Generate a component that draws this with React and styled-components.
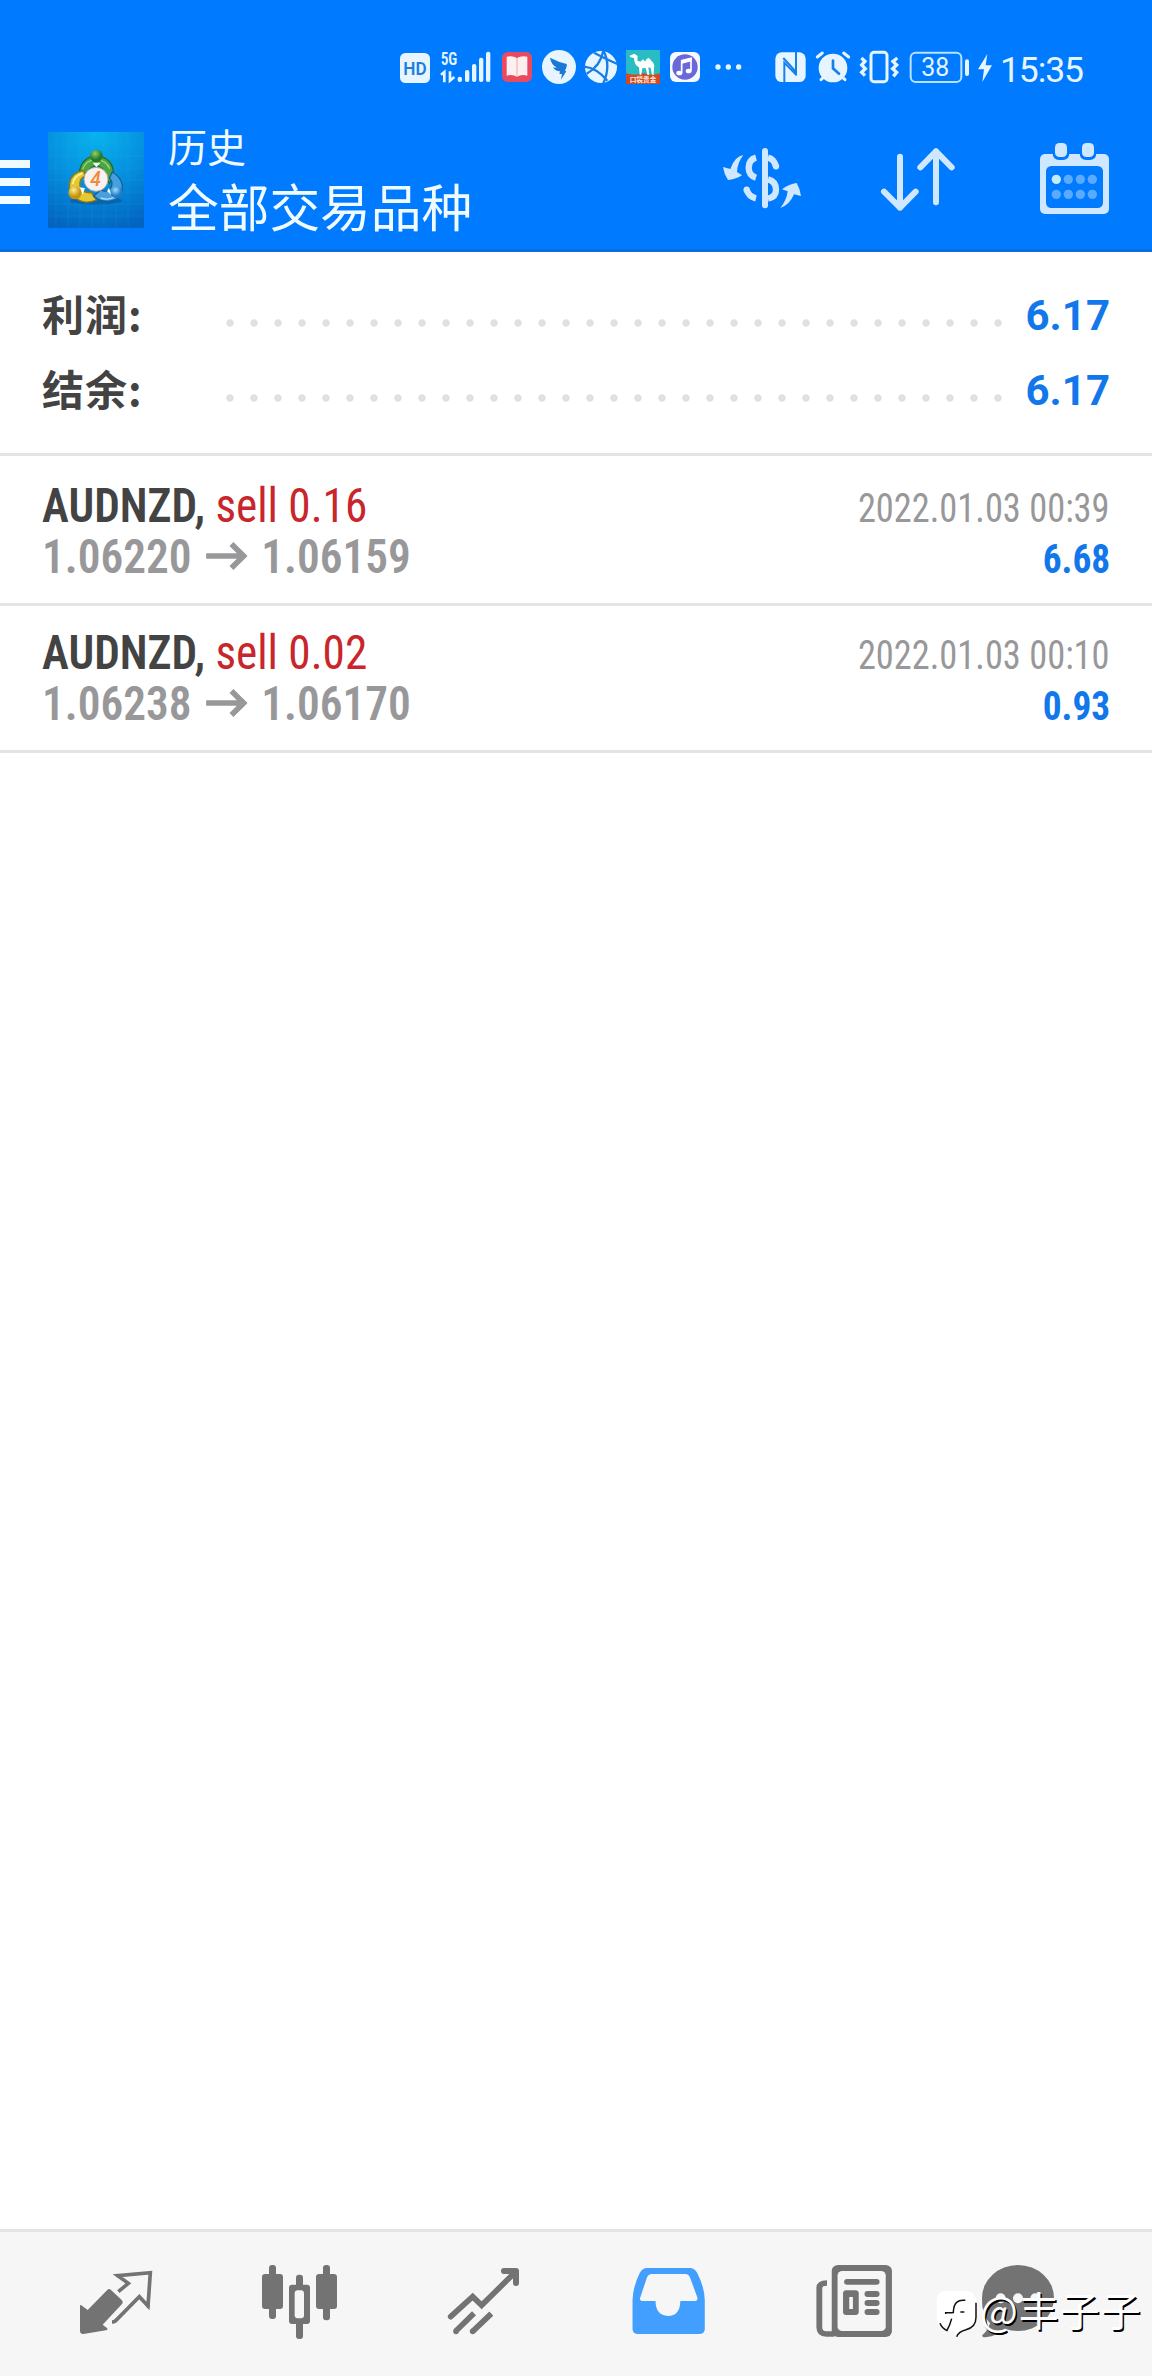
import React from 'react';
import styled, { createGlobalStyle } from 'styled-components';

const c = {
  blue: '#007aff',
  ice: '#e6f5ff',
  icon: '#cfe8ff',
  title: '#f0fbff',
  dark: '#434343',
  grey: '#98989a',
  nav: '#737373',
  navBg: '#f6f6f6',
  line: '#e4e4e4',
  red: '#c8262a',
  profit: '#1277ea',
};

const GlobalStyle = createGlobalStyle`
  * { box-sizing: border-box; }
  body { margin: 0; background: #fff; font-family: Roboto, "Noto Sans CJK SC", sans-serif; }
  svg { display: block; flex: none; }
`;

const Screen = styled.div`
  display: flex;
  flex-direction: column;
  width: 1152px;
  height: 2376px;
  background: #fff;
  overflow: hidden;
`;

const StatusBar = styled.div`
  display: flex;
  align-items: center;
  height: 110px;
  padding: 30px 0 0 400px;
  background: ${c.blue};
`;

const Clock = styled.span`
  margin-left: 3px;
  padding-bottom: 1px;
  font-size: 35.5px;
  line-height: 60px;
  letter-spacing: -1.1px;
  color: ${c.ice};
`;

const AppBar = styled.header`
  display: flex;
  height: 142px;
  background: ${c.blue};
  border-bottom: 3px solid #0a6cdd;
`;

const MenuButton = styled.div`
  display: flex;
  flex-direction: column;
  gap: 10px;
  width: 48px;
  padding-top: 50px;
`;

const MenuLine = styled.span`
  width: 30px;
  height: 8px;
  background: ${c.title};
`;

const LogoSlot = styled.div`
  width: 120px;
  padding-top: 22px;
`;

const Titles = styled.div`
  display: flex;
  flex-direction: column;
  width: 553px;
  padding-top: 7px;
  color: ${c.title};
  font-family: "Noto Sans CJK SC", sans-serif;
`;

const Caption = styled.span`
  font-size: 39px;
  line-height: 56px;
`;

const Title = styled.span`
  font-size: 50.7px;
  line-height: 64px;
`;

const Actions = styled.div`
  display: flex;
  justify-content: space-between;
  width: 390px;
  padding-top: 30px;
`;

const Summary = styled.section`
  display: flex;
  flex-direction: column;
  height: 204px;
  padding: 26px 42px 0;
  border-bottom: 3px solid ${c.line};
`;

const SummaryRow = styled.div`
  display: flex;
  align-items: center;
  height: 75px;
`;

const Label = styled.span`
  width: 176px;
  padding-bottom: 5px;
  font: 700 42px/70px "Noto Sans CJK SC", sans-serif;
  letter-spacing: 1px;
  color: ${c.dark};
`;

const Leader = styled.span`
  width: 792px;
  height: 24px;
  margin-top: 15px;
  background: radial-gradient(circle at center, #e0e0e0 3.2px, transparent 4.2px) 0 0 / 24px 24px;
`;

const Total = styled.span`
  flex: 1;
  text-align: right;
  font-size: 42px;
  font-weight: 700;
  line-height: 75px;
  color: ${c.profit};
`;

const Deal = styled.article`
  padding: ${(p) => p.$top}px 42px 21px;
  border-bottom: 3px solid ${c.line};
  font-family: "Roboto Condensed", Roboto, sans-serif;
`;

const DealLine = styled.div`
  display: flex;
  align-items: baseline;
  justify-content: space-between;
  height: 51px;
  line-height: 51px;
  white-space: pre;
`;

const Symbol = styled.span`
  font-size: 48px;
  font-weight: 600;
  color: ${c.dark};
  transform: scaleX(0.942);
  transform-origin: left;
`;

const Side = styled.span`
  font-weight: 400;
  color: ${c.red};
`;

const Prices = styled.span`
  display: flex;
  align-items: baseline;
  gap: 15px;
  font-size: 48px;
  font-weight: 600;
  color: ${c.grey};
  transform: scaleX(0.943);
  transform-origin: left;
`;

const Time = styled.span`
  font-size: 40px;
  color: ${c.grey};
  transform: scaleX(0.91);
  transform-origin: right;
`;

const Profit = styled.span`
  font-size: 40px;
  font-weight: 700;
  color: ${c.profit};
  transform: scaleX(0.935);
  transform-origin: right;
`;

const ArrowBox = styled.span`
  align-self: center;
  margin-bottom: 2px;
`;

const Blank = styled.main`
  flex: 1;
`;

const NavBar = styled.nav`
  position: relative;
  display: flex;
  height: 147px;
  padding: 0 24px;
  background: ${c.navBg};
  border-top: 3px solid ${c.line};
`;

const Watermark = styled.div`
  position: absolute;
  left: 936px;
  top: 52px;
  display: flex;
  align-items: center;
  height: 60px;
  color: #fff;
`;

const WatermarkName = styled.span`
  padding-bottom: 11px;
  font: 400 40px/48px "Noto Sans CJK SC", sans-serif;
  letter-spacing: 1px;
  text-shadow: 1.5px 1.5px 0.5px #000;
`;

/* Icons of the status bar share a 3x unit grid, 180 units high. */
const StatusIcon = ({ from, to, children }) => (
  <svg width={(to - from) / 3} height="60" viewBox={`${from} 0 ${to - from} 180`} fill={c.ice}>
    {children}
  </svg>
);

const ActionIcon = ({ from, width, children }) => (
  <svg width={width} height="80" viewBox={`${from} 60 ${width * 3} 240`} fill={c.icon}>
    {children}
  </svg>
);

const NavIcon = ({ index, children }) => (
  <svg width="184" height="144" viewBox={`${24 + 184 * index} 2232 184 144`} fill={c.nav}>
    {children}
  </svg>
);

const left = 'translate(40 2220) scale(.33333)';
const right = 'translate(580 2220) scale(.36483 .33333)';

function StatusIcons() {
  return (
    <>
      <StatusIcon from={30} to={135}>
        <rect x="30" y="39" width="90" height="90" rx="16" />
        <text x="75" y="104" textAnchor="middle" fontFamily="Roboto" fontWeight="600" fontSize="56" textLength="70" lengthAdjust="spacingAndGlyphs" fill="#1c7fe0">HD</text>
      </StatusIcon>
      <StatusIcon from={135} to={321}>
        <text x="152" y="76" fontFamily="Roboto Condensed, Roboto" fontWeight="600" fontSize="56" textLength="50" lengthAdjust="spacingAndGlyphs">5G</text>
        <path d="M153 104L163 96V127M180 94V122L193 111" fill="none" stroke={c.ice} strokeWidth="8" />
        <rect x="203" y="110" width="13" height="16" rx="6" />
        <rect x="225" y="90" width="13" height="36" rx="6" />
        <rect x="246" y="72" width="13" height="54" rx="6" />
        <rect x="267" y="53" width="13" height="73" rx="6" />
        <rect x="288" y="35" width="13" height="91" rx="6" />
      </StatusIcon>
      <StatusIcon from={321} to={441}>
        <rect x="336" y="36" width="90" height="90" rx="17" fill="#ea4a60" />
        <path d="M350 50Q368 46 381 54Q394 46 412 50V107Q394 102 381 110Q368 102 350 107Z" fill="#fff0f0" />
        <path d="M381 54V108" stroke="#e9a7b0" strokeWidth="3" />
      </StatusIcon>
      <StatusIcon from={441} to={570}>
        <circle cx="507" cy="81" r="51" />
        <path d="M480 53Q505 66 530 72Q532 78 525 92L529 94L513 119L516 102H508L510 94Q496 94 489 82Q496 84 500 82Q484 75 480 53Z" fill="#1b78d5" />
      </StatusIcon>
      <StatusIcon from={570} to={693}>
        <circle cx="633" cy="81" r="48" />
        <path d="M583 80Q620 84 652 122M590 101Q632 78 640 32M612 38Q650 58 682 72M640 32Q664 76 640 130" fill="none" stroke="#177de8" strokeWidth="7" />
      </StatusIcon>
      <StatusIcon from={693} to={825}>
        <rect x="708" y="30" width="102" height="102" fill="#27bdc2" />
        <path d="M708 100Q735 108 760 100Q790 108 810 100V132H708Z" fill="#d04a24" />
        <path d="M719 47L733 41L743 48L742 62L752 65Q759 52 765 65Q774 45 784 62Q796 72 792 84L791 104H786L782 84L775 82L778 104H772L767 84L757 85L754 104H749L747 82Q733 77 732 54L721 52Z" fill="#fff" />
        <text x="759" y="126" textAnchor="middle" fontFamily="Noto Sans CJK SC" fontWeight="700" fontSize="20" fill="#ffe6d8">口袋贵金</text>
      </StatusIcon>
      <StatusIcon from={825} to={954}>
        <rect x="840" y="36" width="90" height="90" rx="18" fill="#f7f9ff" />
        <circle cx="885" cy="81" r="38" fill="#6a68d8" />
        <path d="M875 99V62L903 55V92" fill="none" stroke="#fff" strokeWidth="5" />
        <path d="M873 61L905 53V64L873 72Z" fill="#fff" />
        <ellipse cx="868" cy="99" rx="9" ry="7" fill="#fff" />
        <ellipse cx="896" cy="93" rx="9" ry="7" fill="#fff" />
      </StatusIcon>
      <StatusIcon from={954} to={1080}>
        <circle cx="984" cy="81" r="8" />
        <circle cx="1015" cy="81" r="8" />
        <circle cx="1046" cy="81" r="8" />
      </StatusIcon>
      <StatusIcon from={30} to={216}>
        <rect x="106" y="37" width="91" height="89" rx="19" />
        <path d="M133 128V68L170 106M168 34V96L130 54" fill="none" stroke="#1680ee" strokeWidth="6" />
      </StatusIcon>
      <StatusIcon from={216} to={345}>
        <circle cx="279" cy="84" r="43" />
        <path d="M232 51L247 39M311 39L326 51M243 119L255 108M315 119L303 108" stroke={c.ice} strokeWidth="9" strokeLinecap="round" />
        <path d="M279 62V85L297 101" fill="none" stroke="#177fe8" strokeWidth="8" strokeLinecap="round" />
      </StatusIcon>
      <StatusIcon from={345} to={495}>
        <rect x="393" y="37" width="48" height="88" rx="9" fill="none" stroke={c.ice} strokeWidth="9" />
        <path d="M364 54L375 64L365 75L376 86L365 97L375 107M472 54L459 64L470 75L458 86L470 97L460 109" fill="none" stroke={c.ice} strokeWidth="10" />
      </StatusIcon>
      <StatusIcon from={495} to={702}>
        <rect x="512" y="38" width="152" height="88" rx="15" fill="none" stroke="#b9e2ff" strokeWidth="6" />
        <rect x="675" y="58" width="12" height="50" rx="6" />
        <text x="586" y="109" textAnchor="middle" fontFamily="Roboto" fontSize="76" textLength="84" lengthAdjust="spacingAndGlyphs">38</text>
      </StatusIcon>
      <StatusIcon from={702} to={771}>
        <path d="M742 42L714 88H732L727 126L756 76H737Z" />
      </StatusIcon>
    </>
  );
}

function Logo() {
  return (
    <svg width="96" height="96" viewBox="0 6 288 288">
      <defs>
        <radialGradient id="sky" cx=".5" cy="0" r="1.05">
          <stop offset="0" stopColor="#08b4ee" />
          <stop offset=".5" stopColor="#0590de" />
          <stop offset="1" stopColor="#0264c0" />
        </radialGradient>
        <radialGradient id="g" cx=".4" cy=".3"><stop offset="0" stopColor="#8fd06c" /><stop offset="1" stopColor="#247b2c" /></radialGradient>
        <radialGradient id="y" cx=".4" cy=".3"><stop offset="0" stopColor="#fff08c" /><stop offset="1" stopColor="#c5920f" /></radialGradient>
        <radialGradient id="b" cx=".4" cy=".3"><stop offset="0" stopColor="#9bdcff" /><stop offset="1" stopColor="#1d7cc4" /></radialGradient>
      </defs>
      <rect y="6" width="288" height="288" fill="url(#sky)" />
      <path d="M24 6V294M60 6V294M96 6V294M132 6V294M168 6V294M204 6V294M240 6V294M0 42H288M0 78H288M0 114H288M0 150H288M0 186H288M0 222H288M0 258H288" stroke="#5cc4f5" strokeOpacity=".14" strokeWidth="2" />
      <ellipse cx="144" cy="212" rx="78" ry="12" fill="#064a86" opacity=".45" />
      <path d="M94 128Q98 84 145 76Q193 84 196 126Q194 150 184 160L170 130Q165 112 145 106Q124 112 118 128Z" fill="#4ea53f" stroke="#1f6d31" strokeWidth="4" />
      <path d="M104 118Q112 91 145 88Q175 91 185 116" fill="none" stroke="#9bd585" strokeWidth="4" />
      <path d="M108 122Q70 127 65 160Q60 187 84 205Q110 225 145 210L130 188Q104 190 96 170Q92 148 110 138Z" fill="#e4c932" stroke="#947616" strokeWidth="4" />
      <path d="M103 130Q78 138 74 162" fill="none" stroke="#fff39a" strokeWidth="5" />
      <path d="M193 126Q220 141 223 168Q224 196 204 208Q166 224 137 198L158 180Q181 190 190 170Q196 155 184 145Z" fill="#479fdc" stroke="#12609e" strokeWidth="4" />
      <path d="M158 204Q180 212 199 201" fill="none" stroke="#a8dcff" strokeWidth="4" />
      <path d="M134 98H158L145 112ZM92 172L104 194L111 174ZM183 173L190 194L177 184Z" fill="#f3fff2" />
      <circle cx="145" cy="78" r="19" fill="url(#g)" />
      <circle cx="81" cy="188" r="20" fill="url(#y)" />
      <circle cx="206" cy="187" r="18" fill="url(#b)" />
      <circle cx="144" cy="148" r="36" fill="#f7f1f1" stroke="#a8a8a0" strokeWidth="3" />
      <text x="143" y="168" textAnchor="middle" fontFamily="Roboto" fontStyle="italic" fontWeight="500" fontSize="58" fill="#f08a3c">4</text>
    </svg>
  );
}

function ActionIcons() {
  return (
    <Actions>
      <ActionIcon from={93} width={82}>
        <rect x="216" y="84" width="18" height="181" rx="9" />
        <g fill="none" stroke={c.icon} strokeWidth="19">
          <path d="M198 113Q176 119 176 144Q176 166 198 173M234 178Q258 184 258 209Q258 231 234 236" />
          <path d="M198 235Q176 230 170 209" />
          <path d="M234 113Q252 117 258 139" />
        </g>
        <circle cx="170" cy="209" r="9.5" />
        <circle cx="258" cy="139" r="9.5" />
        <path d="M160 105Q133 110 121 147L99 141Q102 162 114 180Q135 179 156 166L141 156Q142 129 160 105Z" />
        <path d="M271 264Q299 255 312 223L333 228Q331 208 320 189Q298 191 276 208L293 214Q290 240 271 264Z" />
      </ActionIcon>
      <ActionIcon from={564} width={85}>
        <g fill="none" stroke={c.icon} strokeWidth="18" strokeLinecap="round" strokeLinejoin="round">
          <path d="M630 110V263M582 215L630 263L677 215" />
          <path d="M738 247V94M691 142L738 94L785 142" />
        </g>
      </ActionIcon>
      <ActionIcon from={1044} width={73}>
        <rect x="1050" y="102" width="207" height="180" rx="15" />
        <rect x="1068" y="138" width="171" height="126" rx="16" fill={c.blue} />
        <path d="M1088 100H1138Q1138 120 1118 120H1108Q1088 120 1088 100ZM1169 100H1219Q1219 120 1199 120H1189Q1169 120 1169 100Z" fill={c.blue} />
        <rect x="1095" y="69" width="36" height="42" rx="13" />
        <rect x="1176" y="69" width="36" height="42" rx="13" />
        {[178, 223].map((y) =>
          [1099, 1135, 1171, 1207].map((x) => (
            <circle key={`${x}-${y}`} cx={x} cy={y} r="14" fill={x === 1099 && y === 178 ? '#c4ebff' : '#5aabff'} />
          ))
        )}
      </ActionIcon>
    </Actions>
  );
}

function Arrow() {
  return (
    <svg width="44" height="28" viewBox="0 0 126 84" preserveAspectRatio="none" fill="none" stroke={c.grey} strokeWidth="17">
      <path d="M0 42H116M77 6L114 42L77 78" />
    </svg>
  );
}

function NavIcons() {
  return (
    <>
      <NavIcon index={0}>
        <g transform={left}>
          <path d="M120 256Q122 253 126 257L143 270L201 211Q207 204 213 210L246 241Q251 247 246 252L188 314L201 324Q205 329 198 331L130 342Q120 342 120 332Z" />
          <path d="M235 215L265 190L233 167L331 158L324 258L298 230L226 303Q222 306 216 306" fill="none" stroke={c.nav} strokeWidth="11" />
          <circle cx="233" cy="167" r="5.5" />
          <circle cx="324" cy="258" r="5.5" />
        </g>
      </NavIcon>
      <NavIcon index={1}>
        <g transform={left}>
          <rect x="687" y="135" width="21" height="162" rx="9" />
          <rect x="666" y="162" width="63" height="105" rx="9" />
          <rect x="768" y="164" width="21" height="193" rx="9" />
          <rect x="747" y="194" width="63" height="118" rx="9" />
          <rect x="764" y="211" width="28" height="84" rx="9" fill={c.navBg} />
          <rect x="849" y="135" width="21" height="166" rx="9" />
          <rect x="828" y="162" width="63" height="105" rx="9" />
        </g>
      </NavIcon>
      <NavIcon index={2}>
        <g transform={left} fill="none" stroke={c.nav} strokeWidth="17">
          <path d="M1232 290L1298 230L1325 256L1426 156" strokeLinecap="round" />
          <path d="M1392 153H1428V189" strokeWidth="18" strokeLinecap="round" strokeLinejoin="round" />
          <path d="M1247 334L1302 280M1298 334L1354 281" />
          <g fill={c.nav} stroke="none">
            <circle cx="1248" cy="334" r="8.5" />
            <circle cx="1298" cy="334" r="8.5" />
          </g>
        </g>
      </NavIcon>
      <NavIcon index={3}>
        <g transform={right}>
          <path fill="#429eff" d="M182 144H303Q315 146 321 158Q341 200 342 240V328Q341 342 329 342H157Q145 342 144 328V240Q145 200 164 158Q170 146 182 144Z" />
          <path fill={c.navBg} d="M195 162H291Q298 163 301 171L322 233Q323 243 315 243H275Q274 288 241 288Q207 285 207 243H170Q162 242 165 233L184 171Q187 163 195 162Z" />
        </g>
      </NavIcon>
      <NavIcon index={4}>
        <g transform={right}>
          <rect x="690" y="135" width="165" height="216" rx="17" />
          <rect x="706" y="153" width="132" height="180" rx="13" fill={c.navBg} />
          <path d="M677 189Q656 189 656 204V322Q656 342 675 342H697" fill="none" stroke={c.nav} strokeWidth="16" />
          <rect x="724" y="177" width="97" height="17" rx="8" />
          <rect x="721" y="211" width="43" height="74" rx="9" />
          <rect x="738" y="231" width="10" height="36" fill={c.navBg} />
          <rect x="780" y="213" width="41" height="18" rx="8" />
          <rect x="780" y="240" width="41" height="18" rx="8" />
          <rect x="780" y="267" width="41" height="18" rx="8" />
        </g>
      </NavIcon>
      <NavIcon index={5}>
        <g transform="translate(930 2260) scale(.33333)">
          <ellipse cx="264" cy="114" rx="108" ry="99" />
          <path d="M157 110V140Q163 172 180 190Q174 212 157 225Q155 232 166 232Q205 226 228 206Z" />
          <circle cx="212" cy="115" r="15" fill={c.navBg} />
          <circle cx="264" cy="115" r="15" fill={c.navBg} />
          <circle cx="316" cy="115" r="15" fill={c.navBg} />
        </g>
      </NavIcon>
    </>
  );
}

function WatermarkLogo() {
  return (
    <svg width="44" height="48" viewBox="18 90 132 144">
      <path d="M45 93H110Q140 95 140 128V175Q138 203 104 209L78 230L72 212L56 215L62 190L30 200Q20 190 20 165V120Q22 95 45 93Z" fill="#fff" />
      <g fill="none" stroke="#111" strokeWidth="4.5">
        <path d="M106 121Q72 116 70 155V160M47 162V158H68M91 156H103M65 176Q60 196 50 213M138 128V172Q138 202 108 209Q86 214 80 230M30 190Q35 204 51 212" />
      </g>
    </svg>
  );
}

const totals = [
  { label: '利润:', value: '6.17' },
  { label: '结余:', value: '6.17' },
];

const deals = [
  { symbol: 'AUDNZD,', side: ' sell 0.16', open: '1.06220', close: '1.06159', time: '2022.01.03 00:39', profit: '6.68' },
  { symbol: 'AUDNZD,', side: ' sell 0.02', open: '1.06238', close: '1.06170', time: '2022.01.03 00:10', profit: '0.93' },
];

export default function App() {
  return (
    <Screen>
      <GlobalStyle />
      <StatusBar>
        <StatusIcons />
        <Clock>15:35</Clock>
      </StatusBar>
      <AppBar>
        <MenuButton>
          <MenuLine />
          <MenuLine />
          <MenuLine />
        </MenuButton>
        <LogoSlot>
          <Logo />
        </LogoSlot>
        <Titles>
          <Caption>历史</Caption>
          <Title>全部交易品种</Title>
        </Titles>
        <ActionIcons />
      </AppBar>
      <Summary>
        {totals.map((t) => (
          <SummaryRow key={t.label}>
            <Label>{t.label}</Label>
            <Leader />
            <Total>{t.value}</Total>
          </SummaryRow>
        ))}
      </Summary>
      {deals.map((d, i) => (
        <Deal key={d.time} $top={i === 0 ? 24 : 21}>
          <DealLine>
            <Symbol>
              {d.symbol}
              <Side>{d.side}</Side>
            </Symbol>
            <Time>{d.time}</Time>
          </DealLine>
          <DealLine>
            <Prices>
              <span>{d.open}</span>
              <ArrowBox>
                <Arrow />
              </ArrowBox>
              <span>{d.close}</span>
            </Prices>
            <Profit>{d.profit}</Profit>
          </DealLine>
        </Deal>
      ))}
      <Blank />
      <NavBar>
        <NavIcons />
        <Watermark>
          <WatermarkLogo />
          <WatermarkName>@丰子子</WatermarkName>
        </Watermark>
      </NavBar>
    </Screen>
  );
}
